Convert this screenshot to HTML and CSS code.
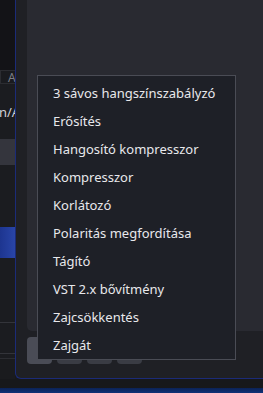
FILE: index.html
```html
<!DOCTYPE html>
<html lang="hu">
<head>
    <meta charset="UTF-8">
    <meta name="viewport" content="width=device-width, initial-scale=1.0">
    <title>Effektus hozzáadása</title>
    <link rel="stylesheet" href="styles.css">
</head>
<body>

    <div class="screen">
        <div class="top">
            <!-- main window behind the dialog -->
            <div class="behind">
                <div class="behind-dark"></div>
                <div class="behind-head"><span class="cell"></span><span class="cell-text">A</span></div>
                <div class="behind-row tall"><span class="row-text">n/A</span></div>
                <div class="behind-row light"></div>
                <div class="behind-row mid"></div>
                <div class="behind-row selected"></div>
                <div class="behind-row lined"></div>
                <div class="behind-row lined short"></div>
                <div class="behind-row rest"></div>
            </div>

            <!-- effects dialog -->
            <div class="dialog">
                <div class="panel"></div>
                <div class="buttons">
                    <button class="btn active">-</button>
                    <button class="btn"></button>
                    <button class="btn"></button>
                    <button class="btn"></button>
                </div>

                <ul class="menu">
                    <li>3 sávos hangszínszabályzó</li>
                    <li>Erősítés</li>
                    <li>Hangosító kompresszor</li>
                    <li>Kompresszor</li>
                    <li>Korlátozó</li>
                    <li>Polaritás megfordítása</li>
                    <li>Tágító</li>
                    <li>VST 2.x bővítmény</li>
                    <li>Zajcsökkentés</li>
                    <li>Zajgát</li>
                </ul>
            </div>
        </div>
        <div class="taskbar"></div>
    </div>

</body>
</html>
```

FILE: styles.css
```css
* {
    margin: 0;
    padding: 0;
    box-sizing: border-box;
    font-family: 'Noto Sans', sans-serif;
}
body {
    background-color: #17181b;
    width: 263px;
    height: 393px;
    overflow: hidden;
}
.screen {
    display: flex;
    flex-direction: column;
    height: 393px;
}
.top {
    display: flex;
    height: 379px;
}
.behind {
    width: 15px;
    display: flex;
    flex-direction: column;
    background: #1b1c20;
    overflow: hidden;
}
.behind-dark {
    height: 70px;
    background: #131317;
}
.behind-head {
    height: 14px;
    display: flex;
    align-items: center;
    border-top: 1px solid #2b2c31;
    border-bottom: 1px solid #2b2c31;
    background: #1a1b1f;
}
.cell {
    width: 4px;
    height: 100%;
    border-right: 1px solid #2b2c31;
}
.cell-text {
    margin-left: 7px;
    font-size: 12px;
    color: #7d7e86;
}
.behind-row.tall {
    height: 55px;
    display: flex;
    align-items: center;
    padding-top: 1px;
}
.row-text {
    font-size: 13px;
    color: #d2d2d6;
    margin-left: -1px;
    white-space: nowrap;
}
.behind-row.light {
    height: 26px;
    background: #34353d;
}
.behind-row.mid {
    height: 62px;
}
.behind-row.selected {
    height: 31px;
    background: linear-gradient(90deg, #1d3590, #2945a8);
}
.behind-row.lined {
    height: 65px;
    border-bottom: 1px solid #33343a;
}
.behind-row.short {
    height: 31px;
    border-bottom: 1px solid #33343a;
}
.behind-row.rest {
    flex: 1;
    border-top: 1px solid #2c2d32;
    margin-top: 4px;
    background: #1a1b1e;
}
.dialog {
    flex: 1;
    position: relative;
    background: #1f2025;
    border-left: 1px solid #1b2b78;
    border-bottom: 1px solid #1b2b78;
    border-bottom-left-radius: 6px;
    padding-left: 11px;
}
.panel {
    height: 331px;
    background: #292a31;
    border-bottom-left-radius: 5px;
}
.buttons {
    display: flex;
    gap: 5px;
    margin-top: 6px;
}
.btn {
    width: 25px;
    height: 27px;
    border: none;
    border-radius: 4px;
    background: #3a3c44;
    color: white;
    font-size: 13px;
    font-weight: bold;
}
.btn.active {
    background: #4a4c56;
}
.menu {
    position: absolute;
    left: 21px;
    top: 75px;
    width: 199px;
    list-style: none;
    background: #1e2027;
    border: 1px solid #4a4c55;
    padding: 3px 0 0;
}
.menu li {
    height: 28px;
    line-height: 28px;
    padding-left: 15px;
    font-size: 13px;
    color: #e8e8ec;
    white-space: nowrap;
}
.taskbar {
    flex: 1;
    background: linear-gradient(180deg, #17181b 0, #17181b 9px, #0b2256 9px, #103278);
}
```
